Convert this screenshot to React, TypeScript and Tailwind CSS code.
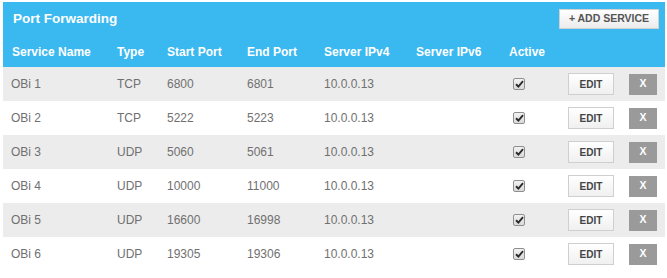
import React from "react"

const services = [
  { name: "OBi 1", type: "TCP", start: "6800", end: "6801", ipv4: "10.0.0.13", ipv6: "" },
  { name: "OBi 2", type: "TCP", start: "5222", end: "5223", ipv4: "10.0.0.13", ipv6: "" },
  { name: "OBi 3", type: "UDP", start: "5060", end: "5061", ipv4: "10.0.0.13", ipv6: "" },
  { name: "OBi 4", type: "UDP", start: "10000", end: "11000", ipv4: "10.0.0.13", ipv6: "" },
  { name: "OBi 5", type: "UDP", start: "16600", end: "16998", ipv4: "10.0.0.13", ipv6: "" },
  { name: "OBi 6", type: "UDP", start: "19305", end: "19306", ipv4: "10.0.0.13", ipv6: "" },
]

const CheckBox = () => (
  <div className="ml-[4px] w-[12px] h-[12px] rounded-[2px] border border-[#8f8f8f] bg-gradient-to-b from-[#f2f2f2] to-[#d9d9d9] flex items-center justify-center">
    <svg width="9" height="8" viewBox="0 0 9 8">
      <path d="M1 4.2 L3.4 6.5 L8 1.2" stroke="#2b2b2b" strokeWidth="1.9" fill="none" />
    </svg>
  </div>
)

const App = () => {
  return (
    <div className="w-[667px] h-[278px] bg-white pt-[2px] pl-[3px] font-['Liberation_Sans',Arial,sans-serif]">
      <div className="w-[662px]">
        <div className="bg-[#3ab8f0] text-white">
          <div className="h-[35px] flex items-center justify-between pl-[10px] pr-[6px]">
            <span className="text-[13.5px] font-bold">Port Forwarding</span>
            <button className="w-[100px] h-[20px] mt-[-1px] bg-gradient-to-b from-white to-[#ececec] border border-[#d0d0d0] text-[#555] text-[10.5px] font-bold">
              + ADD SERVICE
            </button>
          </div>
          <div className="h-[30px] flex items-center pl-[9px] text-[12px] font-bold">
            <div className="w-[105px]">Service Name</div>
            <div className="w-[50px]">Type</div>
            <div className="w-[80px]">Start Port</div>
            <div className="w-[77px]">End Port</div>
            <div className="w-[92px]">Server IPv4</div>
            <div className="w-[93px]">Server IPv6</div>
            <div className="w-[59px]">Active</div>
          </div>
        </div>
        {services.map((s, i) => (
          <div
            key={s.name}
            className={`h-[34px] flex items-center pl-[8px] text-[12px] text-[#707070] ${i % 2 === 0 ? "bg-[#ececec]" : "bg-white"}`}
          >
            <div className="w-[106px]">{s.name}</div>
            <div className="w-[50px]">{s.type}</div>
            <div className="w-[80px]">{s.start}</div>
            <div className="w-[77px]">{s.end}</div>
            <div className="w-[92px]">{s.ipv4}</div>
            <div className="w-[93px]">{s.ipv6}</div>
            <div className="w-[59px]">
              <CheckBox />
            </div>
            <button className="w-[46px] h-[22px] bg-gradient-to-b from-white to-[#f0f0f0] border border-[#cfcfcf] text-[#444] text-[10px] font-bold">
              EDIT
            </button>
            <button className="ml-[15px] w-[28px] h-[21px] bg-[#9a9a9a] text-white text-[10.5px] font-bold">
              X
            </button>
          </div>
        ))}
      </div>
    </div>
  )
}

export default App
